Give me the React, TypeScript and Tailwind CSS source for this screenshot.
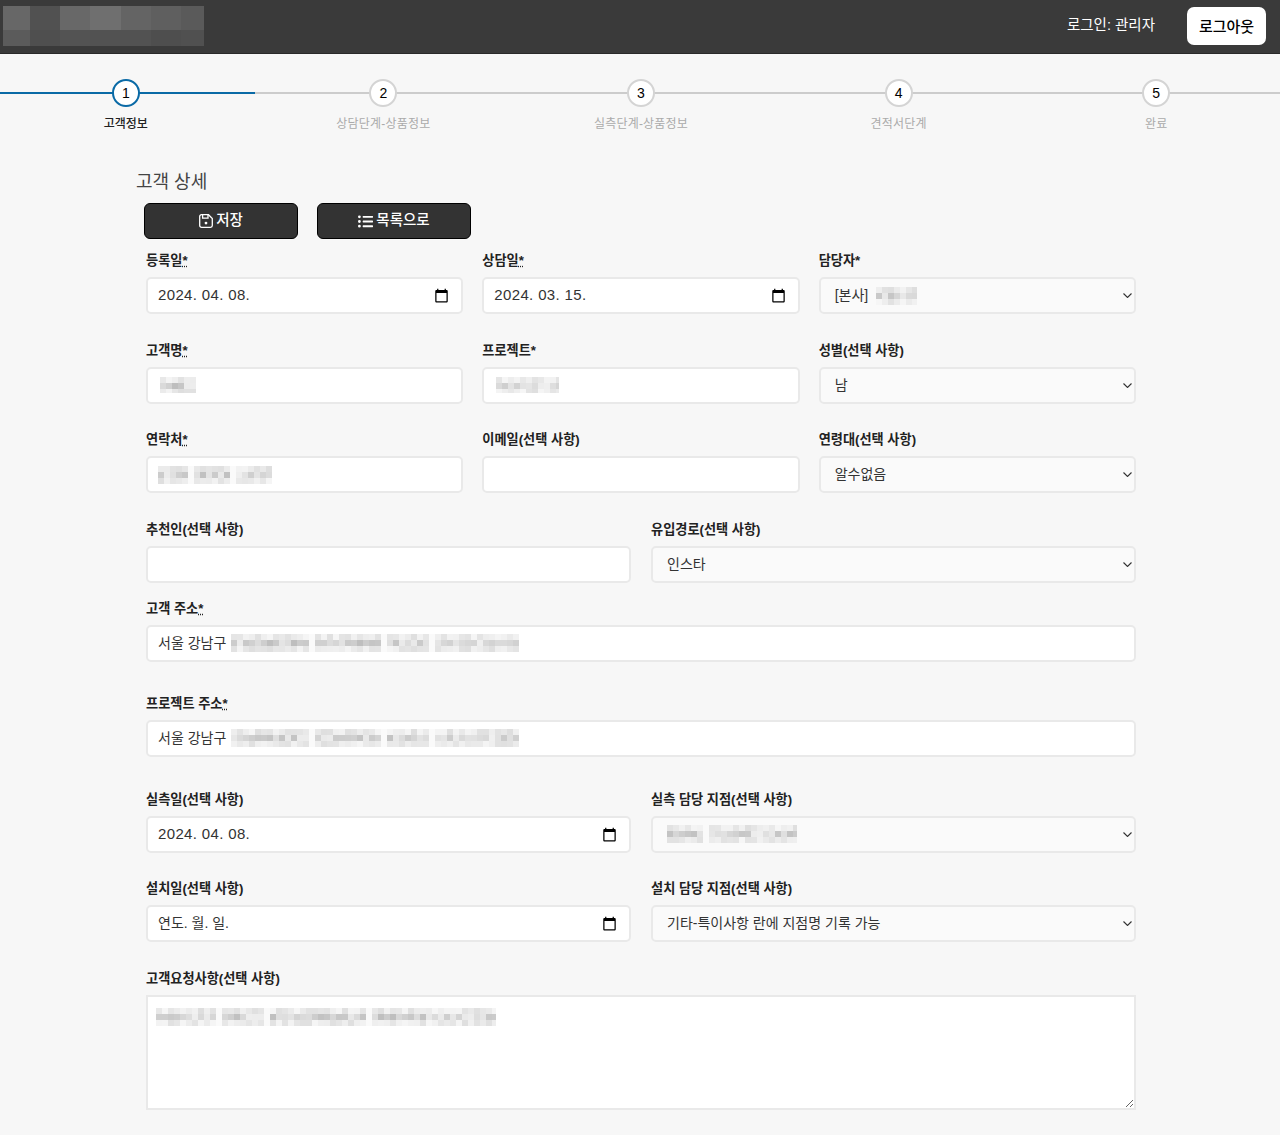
import type { ReactNode } from 'react';
import { FaListUl } from 'react-icons/fa';

const steps = ['고객정보', '상담단계-상품정보', '실측단계-상품정보', '견적서단계', '완료'];

const logoCols = [27, 30, 30, 31, 30, 30, 23];
const logoTop = ['#676767', '#515151', '#686868', '#6f6f6f', '#646464', '#5f5f5f', '#5a5a5a'];
const logoBottom = ['#5b5b5b', '#4f4f4f', '#535353', '#525252', '#525252', '#4e4e4e', '#505050'];

function Logo() {
  let x = 0;
  return (
    <svg width="201" height="40" className="block">
      {logoCols.map((w, i) => {
        const left = x;
        x += w;
        return (
          <g key={i}>
            <rect x={left} y="0" width={w} height="24" fill={logoTop[i]} />
            <rect x={left} y="24" width={w} height="16" fill={logoBottom[i]} />
          </g>
        );
      })}
    </svg>
  );
}

// pixelated blur used where the screenshot hides personal data
function Mosaic({ width, height, seed, gaps = [] }: { width: number; height: number; seed: number; gaps?: number[] }) {
  const cell = 6;
  const rows = Math.ceil(height / cell);
  const cols = Math.ceil(width / cell);
  let s = seed * 7919;
  const next = () => {
    s = (s * 16807) % 2147483647;
    return s / 2147483647;
  };
  const rects = [];
  for (let r = 0; r < rows; r++) {
    for (let c = 0; c < cols; c++) {
      const v = next();
      let grey = r === 1 ? 190 + v * 50 : 222 + v * 24;
      if (gaps.includes(c)) grey = 250;
      const g = Math.round(grey);
      rects.push(<rect key={`${r}-${c}`} x={c * cell} y={r * cell} width={cell} height={cell} fill={`rgb(${g},${g},${g})`} />);
    }
  }
  return (
    <svg width={width} height={height} className="block shrink-0">
      {rects}
    </svg>
  );
}

function SaveIcon() {
  return (
    <svg width="14" height="14" viewBox="0 0 14 14" fill="none" stroke="currentColor" strokeWidth="1.3" className="shrink-0">
      <path d="M2.5.7h7l3.8 3.8v7a1.8 1.8 0 0 1-1.8 1.8h-9a1.8 1.8 0 0 1-1.8-1.8v-9A1.8 1.8 0 0 1 2.5.7z" />
      <path d="M3.6 1v3.2h5.4V1" />
      <circle cx="7" cy="9.1" r="1.4" fill="currentColor" stroke="none" />
    </svg>
  );
}

function CalendarIcon() {
  return (
    <svg width="15" height="15" viewBox="0 0 24 24" className="shrink-0 text-black" fill="currentColor">
      <path d="M20 3h-1V1h-2v2H7V1H5v2H4c-1.1 0-2 .9-2 2v16c0 1.1.9 2 2 2h16c1.1 0 2-.9 2-2V5c0-1.1-.9-2-2-2zm0 18H4V8h16v13z" />
    </svg>
  );
}

function Chevron() {
  return (
    <svg width="9" height="5" viewBox="0 0 9 5" fill="none" stroke="#333" strokeWidth="1.1" className="shrink-0">
      <path d="M0.5 0.5 4.5 4.5 8.5 0.5" />
    </svg>
  );
}

function Label({ text, req, dotted = true }: { text: string; req?: boolean; dotted?: boolean }) {
  return (
    <label className="block h-[18px] mb-[9px] text-[13.2px] leading-[22px] font-semibold text-[#222]">
      {text}
      {req ? dotted ? <abbr title="필수">*</abbr> : '*' : null}
    </label>
  );
}

const boxClass =
  'flex items-center h-[37px] rounded-[5px] border-2 border-[#e9e9e9] text-[14px] text-[#333] overflow-hidden';

function TextBox({ children }: { children?: ReactNode }) {
  return <div className={`${boxClass} bg-white px-[10px] gap-[5px]`}>{children}</div>;
}

function DateBox({ value, hangul = false }: { value: string; hangul?: boolean }) {
  return (
    <div className={`${boxClass} bg-white pl-[10px] pr-[12px] justify-between`}>
      <span className={hangul ? 'text-[14px]' : 'text-[15px] tracking-[0.35px]'}>{value}</span>
      <CalendarIcon />
    </div>
  );
}

function SelectBox({ children }: { children: ReactNode }) {
  return (
    <div className={`${boxClass} bg-[#fafafa] pl-[14px] pr-[2px] justify-between`}>
      <span className="flex items-center gap-[8px]">{children}</span>
      <Chevron />
    </div>
  );
}

export default function App() {
  return (
    <div
      className="h-[1135px] overflow-hidden bg-[#f7f7f7] text-[#222]"
      style={{ fontFamily: '"Liberation Sans", "Noto Sans CJK KR", sans-serif' }}
    >
      <header className="flex h-[54px] items-center justify-between border-b border-[#2a2a2a] bg-[#3a3a3a] pl-[3px] pr-[14px]">
        <div className="-mt-px">
          <Logo />
        </div>
        <div className="flex items-center gap-[32px]">
          <span className="-mt-[2px] text-[14.5px] text-white">로그인: 관리자</span>
          <button className="-mt-px flex h-[38px] w-[79px] items-center justify-center rounded-[7px] bg-white pt-[2px] text-[15px] font-medium text-black">
            로그아웃
          </button>
        </div>
      </header>

      <div className="overflow-hidden">
        <ol className="-ml-[3px] grid w-[1288px] grid-cols-5 pt-[25px]">
          {steps.map((s, i) => (
            <li key={s} className="relative flex flex-col items-center">
              <div className={`absolute left-0 right-0 top-[13px] h-[2px] ${i === 0 ? 'bg-[#0a6aa6]' : 'bg-[#cccccc]'}`} />
              <div
                className={`relative flex h-[28px] w-[28px] items-center justify-center rounded-full border-2 bg-white text-[14px] text-black ${
                  i === 0 ? 'border-[#0a6aa6]' : 'border-[#d4d4d4]'
                }`}
              >
                {i + 1}
              </div>
              <span className={`mt-[9px] text-[12px] leading-[16px] ${i === 0 ? 'font-medium text-[#222]' : 'text-[#aaaaaa] tracking-[0.2px]'}`}>{s}</span>
            </li>
          ))}
        </ol>
      </div>

      <main className="ml-[136px] mt-[38px] w-[1000px]">
        <h2 className="text-[18px] leading-[24px] text-[#444]">고객 상세</h2>
        <div className="ml-[8px] mt-[9px] flex gap-[19px]">
          <button className="flex h-[36px] w-[154px] items-center justify-center gap-[3px] rounded-[6px] border border-black bg-[#333333] text-[14.5px] font-medium text-white">
            <SaveIcon />
            저장
          </button>
          <button className="flex h-[36px] w-[154px] items-center justify-center gap-[3px] rounded-[6px] border border-black bg-[#333333] text-[14.5px] font-medium text-white">
            <FaListUl size={15} />
            목록으로
          </button>
        </div>

        <form className="ml-[10px] mt-[11px] w-[990px]">
          <div className="grid grid-cols-3 gap-x-[19px] gap-y-[25.5px]">
            <div>
              <Label text="등록일" req />
              <DateBox value="2024. 04. 08." />
            </div>
            <div>
              <Label text="상담일" req />
              <DateBox value="2024. 03. 15." />
            </div>
            <div>
              <Label text="담당자" req dotted={false} />
              <SelectBox>
                [본사]
                <Mosaic width={41} height={18} seed={11} />
              </SelectBox>
            </div>
            <div>
              <Label text="고객명" req />
              <TextBox>
                <span className="ml-[2px]">
                  <Mosaic width={36} height={16} seed={23} />
                </span>
              </TextBox>
            </div>
            <div>
              <Label text="프로젝트" req dotted={false} />
              <TextBox>
                <span className="ml-[2px]">
                  <Mosaic width={63} height={16} seed={37} />
                </span>
              </TextBox>
            </div>
            <div>
              <Label text="성별(선택 사항)" />
              <SelectBox>남</SelectBox>
            </div>
            <div>
              <Label text="연락처" req />
              <TextBox>
                <Mosaic width={114} height={18} seed={41} gaps={[5, 12]} />
              </TextBox>
            </div>
            <div>
              <Label text="이메일(선택 사항)" />
              <TextBox />
            </div>
            <div>
              <Label text="연령대(선택 사항)" />
              <SelectBox>알수없음</SelectBox>
            </div>
          </div>

          <div className="mt-[25.5px] grid grid-cols-2 gap-x-[20px]">
            <div>
              <Label text="추천인(선택 사항)" />
              <TextBox />
            </div>
            <div>
              <Label text="유입경로(선택 사항)" />
              <SelectBox>인스타</SelectBox>
            </div>
          </div>

          <div className="mt-[15px]">
            <Label text="고객 주소" req />
            <TextBox>
              서울 강남구
              <Mosaic width={288} height={18} seed={53} gaps={[13, 25, 33]} />
            </TextBox>
          </div>
          <div className="mt-[31px]">
            <Label text="프로젝트 주소" req />
            <TextBox>
              서울 강남구
              <Mosaic width={288} height={18} seed={59} gaps={[13, 25, 33]} />
            </TextBox>
          </div>

          <div className="mt-[32px] grid grid-cols-2 gap-x-[20px] gap-y-[25px]">
            <div>
              <Label text="실측일(선택 사항)" />
              <DateBox value="2024. 04. 08." />
            </div>
            <div>
              <Label text="실측 담당 지점(선택 사항)" />
              <SelectBox>
                <Mosaic width={130} height={18} seed={67} gaps={[6]} />
              </SelectBox>
            </div>
            <div>
              <Label text="설치일(선택 사항)" />
              <DateBox value="연도. 월. 일." hangul />
            </div>
            <div>
              <Label text="설치 담당 지점(선택 사항)" />
              <SelectBox>기타-특이사항 란에 지점명 기록 가능</SelectBox>
            </div>
          </div>

          <div className="mt-[26px]">
            <Label text="고객요청사항(선택 사항)" />
            <div className="relative">
              <textarea className="block h-[115px] w-full border-2 border-[#e9e9e9] bg-white" readOnly />
              <div className="absolute left-[10px] top-[13px]">
                <Mosaic width={340} height={18} seed={71} gaps={[10, 18, 35]} />
              </div>
            </div>
          </div>
        </form>
      </main>
    </div>
  );
}
